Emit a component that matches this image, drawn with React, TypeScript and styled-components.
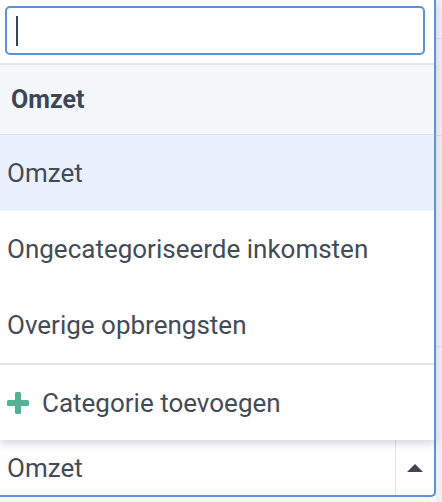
import { FC } from 'react';
import styled, { createGlobalStyle } from 'styled-components';

const GlobalStyle = createGlobalStyle`
  html, body {
    margin: 0;
    padding: 0;
    background: #f6f7f9;
    font-family: Roboto, "Noto Sans", sans-serif;
  }
`;

const Page = styled.div`
  display: flex;
  width: 442px;
  height: 502px;
  overflow: hidden;
`;

const Column = styled.div`
  display: flex;
  flex-direction: column;
  width: 436px;
  flex-shrink: 0;
`;

const Gutter = styled.div`
  flex: 1;
  display: flex;
  flex-direction: column;
  background: #eef0f3;
`;

const GutterRow = styled.div<{ $h: number }>`
  height: ${({ $h }) => $h}px;
  border-bottom: 1px solid #dadde2;
  flex-shrink: 0;
`;

const Panel = styled.div`
  position: relative;
  z-index: 2;
  display: flex;
  flex-direction: column;
  background: #fff;
  border-right: 2px solid #5f92d8;
  box-shadow: 0 4px 8px rgba(40, 50, 70, 0.18);
`;

const SearchWrap = styled.div`
  padding: 6px 9px 8px 5px;
  border-bottom: 2px solid #e1e4e8;
`;

const SearchInput = styled.div`
  height: 45px;
  border: 2px solid #5b92db;
  border-radius: 5px;
  display: flex;
  align-items: center;
  padding-left: 9px;
  background: #fff;
`;

const Caret = styled.span`
  width: 2px;
  height: 30px;
  background: #3b4350;
`;

const GroupHeader = styled.div`
  height: 69px;
  display: flex;
  align-items: center;
  padding-left: 11px;
  background: #f5f8fb;
  border-bottom: 1px solid #dfe2e6;
  font-size: 25px;
  font-weight: 700;
  color: #3e4656;
`;

const Option = styled.div<{ $active?: boolean }>`
  height: 76px;
  display: flex;
  align-items: center;
  padding-left: 7px;
  background: ${({ $active }) => ($active ? '#e8f1fd' : '#fff')};
  font-size: 26px;
  color: #434b59;
`;

const Footer = styled.div`
  height: 75px;
  display: flex;
  align-items: center;
  gap: 13px;
  padding-left: 7px;
  border-top: 2px solid #e1e4e8;
  font-size: 26px;
  color: #434b59;
`;

const Select = styled.div`
  height: 55px;
  display: flex;
  align-items: stretch;
  background: #fff;
  border: 2px solid #5f92d8;
  border-top: none;
  border-left: none;
  border-radius: 0 0 5px 0;
`;

const SelectValue = styled.div`
  flex: 1;
  display: flex;
  align-items: center;
  padding-left: 7px;
  font-size: 26px;
  color: #434b59;
`;

const SelectToggle = styled.div`
  width: 38px;
  border-left: 1px solid #e1e4e8;
  display: flex;
  align-items: center;
  justify-content: center;
`;

const PlusIcon: FC = () => (
  <svg width="22" height="22" viewBox="0 0 22 22">
    <rect x="8" y="0" width="6" height="22" rx="1.5" fill="#52b292" />
    <rect x="0" y="8" width="22" height="6" rx="1.5" fill="#52b292" />
  </svg>
);

const CaretUp: FC = () => (
  <svg width="16" height="8" viewBox="0 0 16 8">
    <path d="M8 0 L16 8 L0 8 Z" fill="#3d4555" />
  </svg>
);

const options = ['Omzet', 'Ongecategoriseerde inkomsten', 'Overige opbrengsten'];

const App: FC = () => (
  <>
    <GlobalStyle />
    <Page>
      <Column>
        <Panel>
          <SearchWrap>
            <SearchInput>
              <Caret />
            </SearchInput>
          </SearchWrap>
          <GroupHeader>Omzet</GroupHeader>
          {options.map((o, i) => (
            <Option key={o} $active={i === 0}>
              {o}
            </Option>
          ))}
          <Footer>
            <PlusIcon />
            Categorie toevoegen
          </Footer>
        </Panel>
        <Select>
          <SelectValue>Omzet</SelectValue>
          <SelectToggle>
            <CaretUp />
          </SelectToggle>
        </Select>
      </Column>
      <Gutter>
        <GutterRow $h={38} />
        <GutterRow $h={96} />
        <GutterRow $h={210} />
      </Gutter>
    </Page>
  </>
);

export default App;
